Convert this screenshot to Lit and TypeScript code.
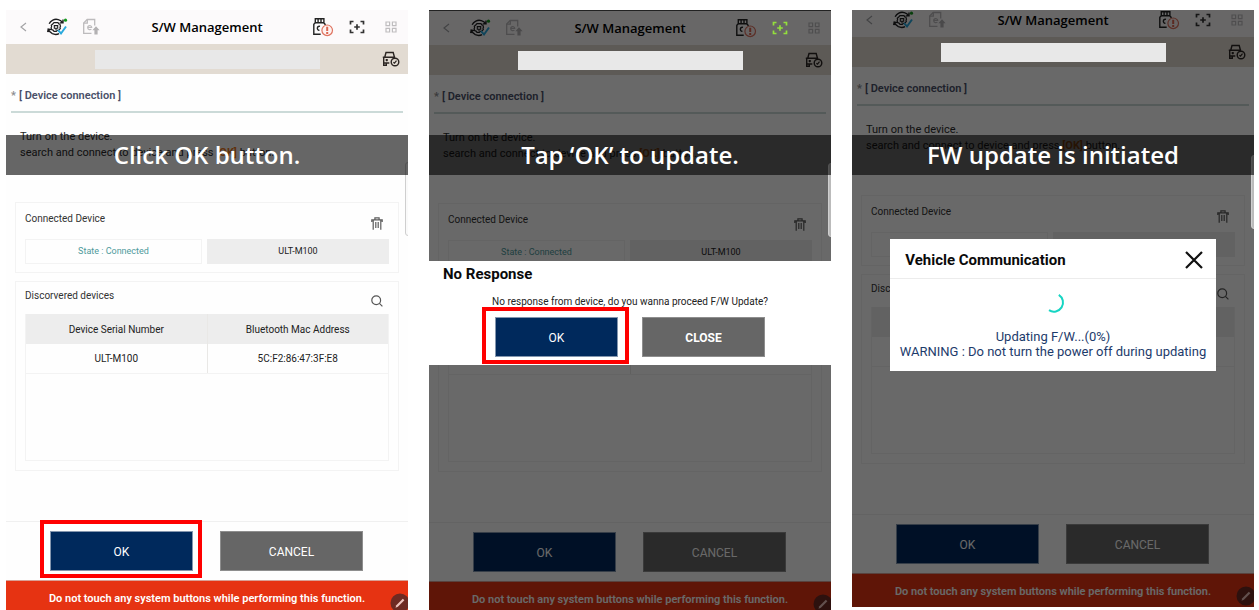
import { LitElement, html, css, nothing } from "lit";
import { customElement, property } from "lit/decorators.js";
import { classMap } from "lit/directives/class-map.js";

const icons = {
  back: html`<svg width="12" height="12" viewBox="0 0 12 12" fill="none" stroke="#a3a3a6" stroke-width="1.2"><path d="M9 2 4 6l5 4"/></svg>`,
  vci: html`<svg width="22" height="20" viewBox="0 0 22 20" fill="none" stroke="#1d1d1f" stroke-width="1.4">
    <path d="M3.200 6.800C4.500 3.400 8.500 1.500 12.300 2.600c2 .6 3.400 1.700 4.300 3.200M17 2.600v3.300h-3.300M2.200 12c.8 2.200 2 3.700 4.100 4.700 2.400 1 4.700 1 6.700-.1M1.700 15.200l.5-3.200 3.100.6"/>
    <path stroke-width="1.200" d="M8 5.600h4l.6 1.200 1.300.5.6 1.800-.5 1.100.3 1.400-1.600 1.500-1.400.2-1 1H8l-1-1.200-1.400-.6-.5-1.700.5-1.100-.3-1.400L6.700 7z"/>
    <path stroke-width="1.100" d="M8.300 8.600h3.400v2.600H8.300zM10 11.200v2"/>
    <path stroke="#2aa9dc" stroke-width="2" d="m12 13.200 3 3.300 5-7"/>
    <circle cx="19.500" cy="3.200" r="1.600" fill="#14981c" stroke="none"/></svg>`,
  doc: html`<svg width="18" height="18" viewBox="0 0 18 18" fill="none" stroke="#bdbbbd" stroke-width="1.3">
    <path d="M9.500 15.400H1.700V5l3.500-3.500h7.500v6"/><path d="M1.700 5.200h3.600V1.500"/>
    <path stroke-width="1.2" d="M5.700 9.500h4c0-2.500-4-2.500-4 .2 0 2.200 2.700 2.400 3.700 1.400"/>
    <path fill="#b3b1b3" stroke="none" d="m14 8.200 3.600 4h-2v4.200h-3.200v-4.200h-2z"/></svg>`,
  sd: html`<svg width="22" height="20" viewBox="0 0 22 20" fill="none" stroke="#232323" stroke-width="1.4">
    <path d="M8.700 17.200H1.800V7.300l1.500-1.600h8.400l1.400 1.600v.7"/><path d="M3.300 5.500V1.800h8.600v3.700M6.100 2v3.500M9 2v3.500"/>
    <path d="M8 9.400c-3.300-1-3.500 4.200-.6 3.800"/>
    <circle cx="15.200" cy="13.300" r="5.300" stroke="#df7461" stroke-width="1.2" fill="#fdf3f2"/>
    <path stroke="#dc6550" stroke-width="2" d="M15.200 9.700v4.200M15.200 15v1.900"/></svg>`,
  target: html`<svg width="16" height="14" viewBox="0 0 16 14" fill="none" stroke="currentColor" stroke-width="1.7">
    <path d="M1.500 4.500v-3h3M11.500 1.500h3v3M14.500 9.500v3h-3M4.500 12.500h-3v-3M8 4.200v5.600M5.200 7h5.600"/></svg>`,
  grid: html`<svg width="12" height="12" viewBox="0 0 12 12" fill="none" stroke="#bfbdbf" stroke-width="1.2">
    <path d="M1 1h3.600v3.600H1zM7.400 1H11v3.600H7.400zM1 7.400h3.600V11H1zM7.400 7.400H11V11H7.400z"/></svg>`,
  car: html`<svg width="18" height="16" viewBox="0 0 18 16" fill="none" stroke="#2b2522" stroke-width="1.4">
    <path d="M2.800 6 4 1.500h7.200L12.400 6M.8 6.200h12.400M1.700 6.300v8h2.600v-2M1.700 12h5.600"/><path d="M3.600 9h2.300M4.700 8v2.200"/>
    <circle cx="13" cy="11" r="3.800"/><path stroke-width="1.2" d="m11.400 11.200 1.100 1 2-2.500"/></svg>`,
  trash: html`<svg width="12" height="13" viewBox="0 0 12 13" fill="none" stroke="#5c5c5c" stroke-width="1.2">
    <path d="M.8 5V2.800h10.400V5M3.900 2.800V.8h4.200v2M2.200 3v9.800M9.800 3v9.800M4.800 5v6M7.200 5v6"/></svg>`,
  search: html`<svg width="12" height="12" viewBox="0 0 12 12" fill="none" stroke="#555" stroke-width="1.2">
    <circle cx="5.200" cy="5.200" r="4.400"/><path d="m8.400 8.400 3 3"/></svg>`,
  pen: html`<svg width="20" height="20" viewBox="0 0 20 20"><circle cx="10" cy="10" r="9.500" fill="#6e2a22"/>
    <path fill="#eec3bd" d="m5.500 14.800.8-2.600 6.500-6.500 1.600 1.600-6.500 6.500z"/></svg>`,
  close: html`<svg width="18" height="18" viewBox="0 0 18 18" fill="none" stroke="#111" stroke-width="2.2"><path d="m1 1 16 16M17 1 1 17"/></svg>`,
  spinner: html`<svg width="24" height="24" viewBox="0 0 24 24" fill="none" stroke="#16d5c3" stroke-width="2"><path d="M17.800 4.800A9 9 0 0 1 8 20.200"/></svg>`,
};

const controls = css`
  * { box-sizing: border-box; }
  button { font: inherit; color: inherit; background: none; border: 0; margin: 0; padding: 0; cursor: pointer; }
  svg { display: block; }
  h1, h2, h3, p { margin: 0; font-size: inherit; font-weight: inherit; }
  .actions { display: flex; }
  .slot { position: relative; flex: 1; display: flex; }
  .action { flex: 1; height: 40px; padding-top: 1px; font-size: 12px; color: #fff; border: 1px solid #8e8e8e; background: #666; }
  .primary { background: #00295c; border-color: #8496ae; }
  .mark { position: absolute; inset: -11px -9px -7px -10px; border: 4px solid #f00; pointer-events: none; }
`;

@customElement("management-screen")
class ManagementScreen extends LitElement {
  @property() caption = "";
  @property({ type: Boolean }) dimmed = false;
  @property({ type: Boolean }) scrolled = false;
  @property({ type: Boolean }) edged = false;
  @property({ type: Boolean }) highlight = false;

  static styles = [controls, css`
    :host { display: block; font: 11px/16px Roboto, "Noto Sans", sans-serif; color: #333; }
    .screen { position: relative; overflow: hidden; isolation: isolate; background: #fefefe; }
    .edged { border-top: 1px solid #222; }
    .content { position: relative; }
    .scrolled .content { margin-top: -7px; }
    .top { display: grid; grid-template-columns: 1fr auto 1fr; align-items: center; height: 34px; background: #fcfafb; }
    .tools { display: flex; }
    .end { justify-content: flex-end; }
    .tool { display: flex; align-items: center; justify-content: center; width: 34px; height: 30px; }
    .lit { position: relative; z-index: 2; color: #93e03c; }
    .title { font: 600 13px/18px "Open Sans", "Noto Sans", sans-serif; color: #000; }
    .vehicle { display: grid; grid-template-columns: 1fr auto 1fr; align-items: center; height: 30px; background: #e2dbd2; }
    .name { grid-column: 2; position: relative; z-index: 2; width: 225px; height: 19px; background: #e8e8e8; }
    .vehicle .tool { justify-self: end; }
    .section { margin: 0 5px; padding: 14px 0 7px; border-bottom: 2px solid #cbdad8; font-weight: 600; color: #4a5069; display: flex; gap: 3px; }
    .star { color: #8b8b8f; }
    .guide { padding: 16px 14px 41px; color: #2a2a2a; }
    .key { color: #f07a1c; font-weight: bold; }
    .card { margin: 0 9px 8px; padding: 7px 9px 8px; border: 1px solid #f3f3f3; }
    .found { padding: 5px 9px 9px; margin-bottom: 50px; }
    .head { display: flex; justify-content: space-between; height: 29px; font-size: 10px; line-height: 18px; }
    .found .head { height: 27px; }
    .small { display: flex; align-items: center; justify-content: center; width: 24px; }
    .card:not(.found) .small { height: 26px; }
    .pair { display: grid; grid-template-columns: 1fr 1fr; font-size: 9px; line-height: 25px; text-align: center; }
    .state { margin-right: 5px; color: #4f9a9c; box-shadow: inset 0 0 0 1px #f3f3f3; }
    .device { background: #ededed; color: #222; }
    .list { height: 147px; border: 1px solid #f3f3f3; border-top: 0; }
    table { width: 100%; border-collapse: collapse; table-layout: fixed; font-size: 10px; color: #222; }
    th, td { height: 30px; padding: 2px 0 0; text-align: center; font-weight: normal; }
    td { height: 29px; border-bottom: 1px solid #f3f3f3; }
    th { background: #ededed; }
    th + th, td + td { border-left: 1px solid #e9e8e6; }
    .footer { border-top: 1px solid #f0f0f0; padding: 9px 45px 9px 44px; gap: 27px; }
    .warning { display: flex; align-items: center; justify-content: center; height: 34px; padding-top: 2px; position: relative; background: #e63312; border-top: 1px solid #d9a196; color: #fff; font-weight: 600; }
    .pen { position: absolute; right: -2px; top: 12px; }
    .overlay { position: absolute; inset: 0; z-index: 1; display: flex; align-items: center; justify-content: center; background: rgba(0, 0, 0, .59); }
    .scroll { position: absolute; z-index: 1; right: -4px; top: 152px; width: 7px; height: 74px; border: 1px solid #cfcfcf; border-radius: 3px; background: #fafafa; }
    .dimmed .scroll { background: #bbb; }
    .caption { position: absolute; z-index: 3; left: 0; right: 0; top: 125px; background: rgba(0, 0, 0, .6); color: #fff; font: 600 24px/40px "Open Sans", "Noto Sans", sans-serif; text-align: center; white-space: nowrap; }
    .edged .caption { top: 124px; }
  `];

  render() {
    return html`<section class=${classMap({ screen: true, dimmed: this.dimmed, scrolled: this.scrolled, edged: this.edged })}>
      <div class="content">
        <header class="top">
          <div class="tools">
            <button class="tool" aria-label="Back">${icons.back}</button>
            <button class="tool" aria-label="Connection">${icons.vci}</button>
            <button class="tool" aria-label="Report">${icons.doc}</button>
          </div>
          <h1 class="title">S/W Management</h1>
          <div class="tools end">
            <button class="tool" aria-label="Storage">${icons.sd}</button>
            <button class=${classMap({ tool: true, lit: this.edged })} aria-label="Capture">${icons.target}</button>
            <button class="tool" aria-label="Menu">${icons.grid}</button>
          </div>
        </header>
        <div class="vehicle"><div class="name"></div><button class="tool" aria-label="Vehicle">${icons.car}</button></div>
        <h2 class="section"><span class="star">*</span>[ Device connection ]</h2>
        <p class="guide">Turn on the device.<br>search and connect to device and press <span class="key">[OK]</span> button.</p>
        <div class="card">
          <div class="head"><h3>Connected Device</h3><button class="small" aria-label="Delete">${icons.trash}</button></div>
          <div class="pair"><div class="state">State : Connected</div><div class="device">ULT-M100</div></div>
        </div>
        <div class="card found">
          <div class="head"><h3>Discorvered devices</h3><button class="small" aria-label="Search">${icons.search}</button></div>
          <div class="list"><table>
            <thead><tr><th>Device Serial Number</th><th>Bluetooth Mac Address</th></tr></thead>
            <tbody><tr><td>ULT-M100</td><td>5C:F2:86:47:3F:E8</td></tr></tbody>
          </table></div>
        </div>
        <div class="actions footer">
          <div class="slot"><button class="action primary">OK</button>${this.highlight ? html`<span class="mark"></span>` : nothing}</div>
          <div class="slot"><button class="action">CANCEL</button></div>
        </div>
        <div class="warning">Do not touch any system buttons while performing this function.<span class="pen">${icons.pen}</span></div>
        ${this.dimmed ? html`<div class="overlay"><slot></slot></div>` : nothing}
        <div class="scroll"></div>
      </div>
      <div class="caption">${this.caption}</div>
    </section>`;
  }
}

@customElement("app-root")
class AppRoot extends LitElement {
  static styles = [controls, css`
    :host { display: block; height: 100vh; overflow: hidden; background: #fff; font: 11px/16px Roboto, "Noto Sans", sans-serif; }
    .screens { display: grid; grid-template-columns: repeat(3, 1fr); gap: 21px; align-items: start; padding: 10px 5px 0 6px; }
    .prompt { width: 100%; background: #fff; padding: 3px 0 8px; color: #222; }
    .heading { font-size: 15px; line-height: 20px; font-weight: bold; color: #0a0a0a; }
    .prompt .heading { padding-left: 14px; }
    .message { margin: 11px 0 8px; font-size: 10px; line-height: 14px; text-align: center; }
    .prompt .actions { padding: 0 66px; gap: 24px; }
    .prompt .mark { inset: -10px -11px -7px -13px; }
    .strong { font-weight: bold; }
    .progress { width: 81%; background: #fff; }
    .bar { display: flex; align-items: center; justify-content: space-between; height: 40px; padding: 2px 13px 0 15px; border-bottom: 1px solid #ececec; }
    .body { display: flex; flex-direction: column; align-items: center; gap: 15px; padding: 11px 0 12px; }
    .status { font-size: 13px; line-height: 15px; color: #1d3b6b; text-align: center; white-space: nowrap; }
  `];

  render() {
    return html`<main class="screens">
      <management-screen caption="Click OK button." highlight></management-screen>
      <management-screen caption="Tap ‘OK’ to update." dimmed edged>
        <div class="prompt" role="dialog" aria-label="No Response">
          <h2 class="heading">No Response</h2>
          <p class="message">No response from device, do you wanna proceed F/W Update?</p>
          <div class="actions">
            <div class="slot"><button class="action primary">OK</button><span class="mark"></span></div>
            <div class="slot"><button class="action strong">CLOSE</button></div>
          </div>
        </div>
      </management-screen>
      <management-screen caption="FW update is initiated" dimmed scrolled>
        <div class="progress" role="dialog" aria-label="Vehicle Communication">
          <div class="bar"><h2 class="heading">Vehicle Communication</h2><button aria-label="Close">${icons.close}</button></div>
          <div class="body">${icons.spinner}<p class="status">Updating F/W...(0%)<br>WARNING : Do not turn the power off during updating</p></div>
        </div>
      </management-screen>
    </main>`;
  }
}
